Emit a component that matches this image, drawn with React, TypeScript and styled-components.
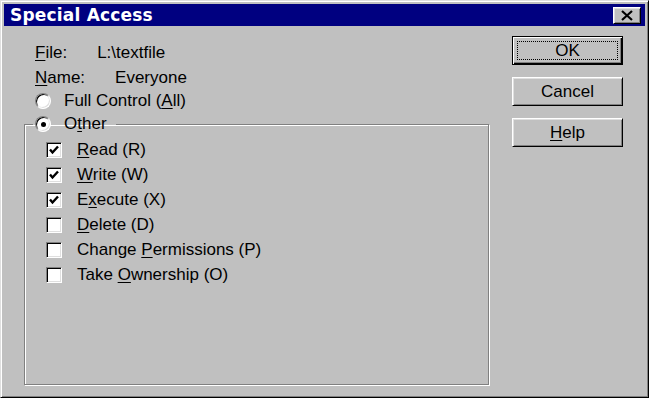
import React from 'react'
import styled, { createGlobalStyle } from 'styled-components'

const GlobalStyle = createGlobalStyle`
  html, body {
    margin: 0;
    padding: 0;
    background: #c0c0c0;
  }

  body {
    font-family: 'Liberation Sans', Arial, sans-serif;
    font-size: 17px;
    color: #000;
  }
`

const Window = styled.div`
  width: 649px;
  height: 398px;
  box-sizing: border-box;
  display: flex;
  flex-direction: column;
  padding: 3px;
  background: #c0c0c0;
  border: 1px solid;
  border-color: #dfdfdf #000 #000 #dfdfdf;
  box-shadow: inset 1px 1px #fff, inset -1px -1px #808080;
`

const TitleBar = styled.div`
  height: 22px;
  flex-shrink: 0;
  display: flex;
  align-items: center;
  justify-content: space-between;
  padding: 0 4px 0 6px;
  background: #000080;
`

const Title = styled.div`
  font-family: 'DejaVu Sans', Verdana, sans-serif;
  font-weight: bold;
  font-size: 17px;
  letter-spacing: 0.2px;
  color: #fff;
`

const CloseButton = styled.div`
  width: 28px;
  height: 17px;
  box-sizing: border-box;
  display: flex;
  align-items: center;
  justify-content: center;
  background: #c0c0c0;
  border: 1px solid;
  border-color: #fff #000 #000 #fff;
  box-shadow: inset 1px 1px #dfdfdf, inset -1px -1px #808080;
`

const Body = styled.div`
  flex: 1;
  display: grid;
  grid-template-columns: 465px 111px;
  column-gap: 23px;
  padding: 10px 22px 9px 20px;
`

const Left = styled.div`
  display: flex;
  flex-direction: column;
  padding-top: 4px;
`

const InfoRow = styled.div`
  height: 25px;
  display: flex;
  align-items: center;
  gap: 30px;
  padding-left: 11px;
`

const OptionRow = styled.label`
  height: 22px;
  display: flex;
  align-items: center;
  gap: 13px;
  padding-left: 11px;
`

const Key = styled.span`
  text-decoration: underline;
  text-underline-offset: 2px;
`

const Radio = styled.span<{ checked?: boolean }>`
  width: 16px;
  height: 16px;
  box-sizing: border-box;
  flex-shrink: 0;
  display: flex;
  align-items: center;
  justify-content: center;
  border-radius: 50%;
  background: #fff;
  border: 1px solid;
  border-color: #808080 #fff #fff #808080;
  box-shadow: inset 1px 1px #000, inset -1px -1px #dfdfdf;

  &::after {
    content: '';
    width: 5px;
    height: 5px;
    border-radius: 50%;
    background: ${(p) => (p.checked ? '#000' : 'transparent')};
  }
`

const Group = styled.fieldset`
  flex: 1;
  margin: 0;
  min-width: 0;
  padding: 0 0 0 8px;
  border: 1px solid #808080;
  box-shadow: inset 1px 1px #fff, 1px 1px #fff;
`

const Legend = styled.legend`
  height: 24px;
  display: flex;
  align-items: center;
  gap: 13px;
  padding: 0 9px 0 2px;
`

const CheckList = styled.div`
  display: flex;
  flex-direction: column;
  padding-top: 1px;
  margin-left: 13px;
`

const CheckRow = styled.label`
  height: 25px;
  display: flex;
  align-items: center;
  gap: 15px;
`

const Box = styled.span`
  width: 16px;
  height: 16px;
  box-sizing: border-box;
  flex-shrink: 0;
  display: flex;
  align-items: center;
  justify-content: center;
  background: #fff;
  border: 1px solid;
  border-color: #808080 #fff #fff #808080;
  box-shadow: inset 1px 1px #000, inset -1px -1px #dfdfdf;
`

const Buttons = styled.div`
  display: flex;
  flex-direction: column;
  gap: 12px;
`

const Button = styled.div<{ isDefault?: boolean }>`
  width: 111px;
  height: 29px;
  box-sizing: border-box;
  display: flex;
  align-items: center;
  justify-content: center;
  padding: 4px;
  background: #c0c0c0;
  border: 1px solid;
  border-color: ${(p) => (p.isDefault ? '#000' : '#fff #000 #000 #fff')};
  box-shadow: ${(p) =>
    p.isDefault
      ? 'inset 1px 1px #fff, inset -1px -1px #000, inset -2px -2px #808080'
      : 'inset 1px 1px #dfdfdf, inset -1px -1px #808080'};
`

const Focus = styled.span`
  flex: 1;
  align-self: stretch;
  display: flex;
  align-items: center;
  justify-content: center;
  border: 1px dotted #000;
`

const CheckMark = () => (
  <svg width="12" height="12" viewBox="0 0 12 12">
    <polyline points="2,5.5 4.5,8.5 10,2.5" fill="none" stroke="#000" strokeWidth="2.4" />
  </svg>
)

type CheckProps = {
  checked?: boolean
  children: React.ReactNode
}

const Check: React.FC<CheckProps> = ({ checked, children }) => (
  <CheckRow>
    <Box>{checked && <CheckMark />}</Box>
    <span>{children}</span>
  </CheckRow>
)

const App: React.FC = () => {
  return (
    <>
      <GlobalStyle />
      <Window>
        <TitleBar>
          <Title>Special Access</Title>
          <CloseButton>
            <svg width="14" height="11" viewBox="0 0 14 11">
              <path d="M2 1 L12 10 M12 1 L2 10" stroke="#000" strokeWidth="2.2" />
            </svg>
          </CloseButton>
        </TitleBar>
        <Body>
          <Left>
            <InfoRow>
              <span>
                <Key>F</Key>ile:
              </span>
              <span>L:\textfile</span>
            </InfoRow>
            <InfoRow>
              <span>
                <Key>N</Key>ame:
              </span>
              <span>Everyone</span>
            </InfoRow>
            <OptionRow>
              <Radio />
              <span>
                Full Control (<Key>A</Key>ll)
              </span>
            </OptionRow>
            <Group>
              <Legend>
                <Radio checked />
                <span>
                  O<Key>t</Key>her
                </span>
              </Legend>
              <CheckList>
                <Check checked>
                  <Key>R</Key>ead (R)
                </Check>
                <Check checked>
                  <Key>W</Key>rite (W)
                </Check>
                <Check checked>
                  E<Key>x</Key>ecute (X)
                </Check>
                <Check>
                  <Key>D</Key>elete (D)
                </Check>
                <Check>
                  Change <Key>P</Key>ermissions (P)
                </Check>
                <Check>
                  Take <Key>O</Key>wnership (O)
                </Check>
              </CheckList>
            </Group>
          </Left>
          <Buttons>
            <Button isDefault>
              <Focus>OK</Focus>
            </Button>
            <Button>Cancel</Button>
            <Button>
              <span>
                <Key>H</Key>elp
              </span>
            </Button>
          </Buttons>
        </Body>
      </Window>
    </>
  )
}

export default App
